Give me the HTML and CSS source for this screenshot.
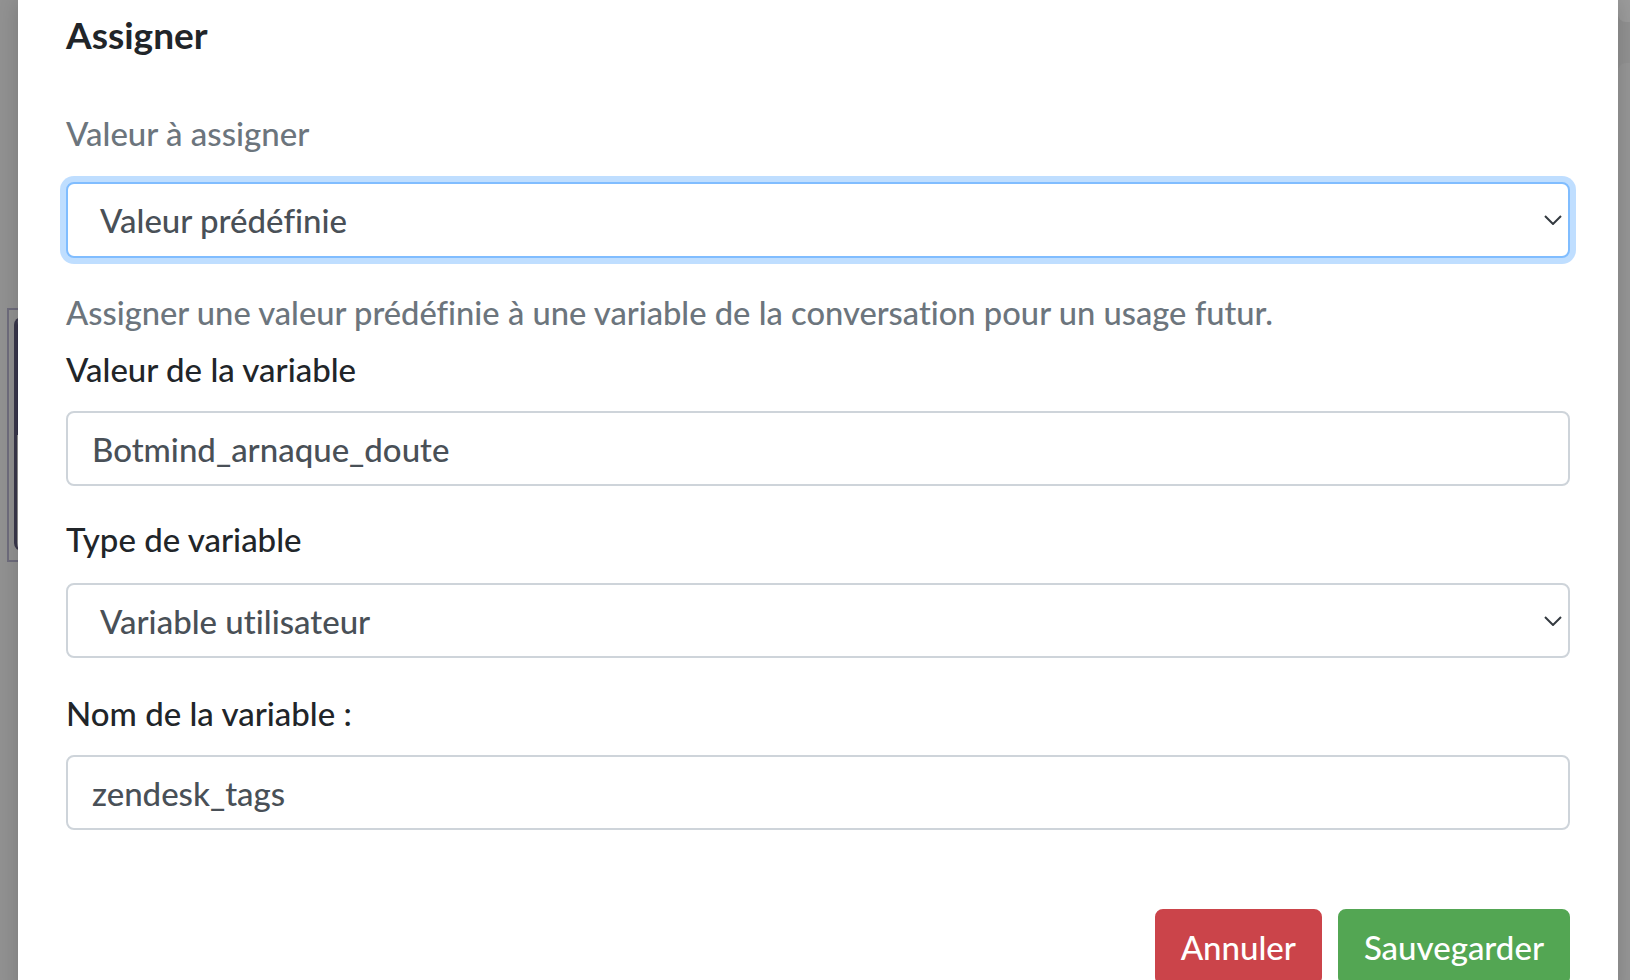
FILE: index.html
```html
<!DOCTYPE html>
<html lang="fr">
<head>
<meta charset="utf-8">
<title>Assigner</title>
<link rel="stylesheet" href="styles.css">
</head>
<body>
<div class="screen">
  <div class="peek-left">
    <div class="peek-left-inner"><div class="peek-left-fill"></div></div>
  </div>
  <div class="peek-right-top"></div>
  <div class="peek-right-bottom"></div>

  <div class="modal">
    <h5 class="title">Assigner</h5>

    <label class="label muted first">Valeur à assigner</label>
    <div class="field select focus">
      <span>Valeur prédéfinie</span>
      <svg class="chevron" width="18" height="10" viewBox="0 0 18 10"><path d="M1 1l8 8 8-8" fill="none" stroke="#343a40" stroke-width="2"/></svg>
    </div>

    <p class="help">Assigner une valeur prédéfinie à une variable de la conversation pour un usage futur.</p>

    <label class="label l-value">Valeur de la variable</label>
    <div class="field input">Botmind_arnaque_doute</div>

    <label class="label l-type">Type de variable</label>
    <div class="field select">
      <span>Variable utilisateur</span>
      <svg class="chevron" width="18" height="10" viewBox="0 0 18 10"><path d="M1 1l8 8 8-8" fill="none" stroke="#343a40" stroke-width="2"/></svg>
    </div>

    <label class="label l-name">Nom de la variable :</label>
    <div class="field input">zendesk_tags</div>

    <div class="footer">
      <button class="btn btn-cancel">Annuler</button>
      <button class="btn btn-save">Sauvegarder</button>
    </div>
  </div>
</div>
</body>
</html>
```

FILE: styles.css
```css
html, body {
  margin: 0;
  padding: 0;
}

body {
  font-family: Lato, "Noto Sans", sans-serif;
  font-variant-ligatures: none;
  font-weight: 500;
  background: #929292;
}

.screen {
  position: relative;
  width: 1630px;
  height: 980px;
  overflow: hidden;
  background: #929292;
}

/* background page content seen through the overlay */
.peek-left {
  position: absolute;
  left: 7px;
  top: 308px;
  width: 40px;
  height: 250px;
  border: 2px solid #6f6d7d;
}

.peek-left-inner {
  position: absolute;
  left: 5px;
  top: 7px;
  width: 40px;
  height: 234px;
  border-left: 3px solid #3a384c;
  border-radius: 8px 0 0 8px;
  overflow: hidden;
}

.peek-left-fill {
  height: 118px;
  background: #36344a;
}

.peek-right-top {
  position: absolute;
  left: 1618px;
  top: -10px;
  width: 40px;
  height: 32px;
  background: #9c9c9c;
  border-radius: 0 0 0 8px;
}

.peek-right-bottom {
  position: absolute;
  left: 1618px;
  top: 63px;
  width: 40px;
  height: 960px;
  background: #979797;
  border-radius: 8px 0 0 0;
}

/* modal */
.modal {
  position: relative;
  z-index: 1;
  margin-left: 18px;
  width: 1600px;
  height: 1000px;
  box-sizing: border-box;
  padding: 11px 48px 0;
  background: #fff;
  box-shadow: 0 0 22px rgba(0, 0, 0, 0.18);
}

.title {
  margin: 0;
  font-size: 37px;
  line-height: 48px;
  font-weight: 700;
  color: #212529;
}

.label {
  display: block;
  font-size: 33px;
  line-height: 48px;
  color: #212529;
}

.label.muted {
  color: #6c757d;
}

.label.first {
  margin-top: 50px;
  margin-bottom: 25px;
}

.label.l-value {
  margin-top: 8px;
  margin-bottom: 18px;
}

.label.l-type {
  margin-top: 29px;
  margin-bottom: 20px;
}

.label.l-name {
  margin-top: 31px;
  margin-bottom: 18px;
}

.help {
  margin: 31px 0 0;
  font-size: 32.7px;
  line-height: 48px;
  color: #6c757d;
}

.field {
  height: 75px;
  box-sizing: border-box;
  border: 2px solid #ced4da;
  border-radius: 8px;
  display: flex;
  align-items: center;
  font-size: 33px;
  line-height: 48px;
  color: #495057;
  background: #fff;
}

.input {
  padding: 0 24px;
}

.select {
  padding: 0 6px 0 32px;
  justify-content: space-between;
}

.select.focus {
  height: 76px;
  border-color: #80bdff;
  box-shadow: 0 0 0 6px rgba(0, 123, 255, 0.25);
}

.chevron {
  display: block;
  flex: none;
}

.footer {
  display: flex;
  justify-content: flex-end;
  gap: 16px;
  margin-top: 79px;
}

.btn {
  font-family: inherit;
  font-variant-ligatures: none;
  font-weight: 500;
  font-size: 33px;
  line-height: 48px;
  padding: 12px 24px;
  border: 2px solid transparent;
  border-radius: 8px;
  color: #fff;
  cursor: pointer;
}

.btn-cancel {
  background: #cb444a;
  border-color: #cb444a;
}

.btn-save {
  background: #53a653;
  border-color: #53a653;
}
```
